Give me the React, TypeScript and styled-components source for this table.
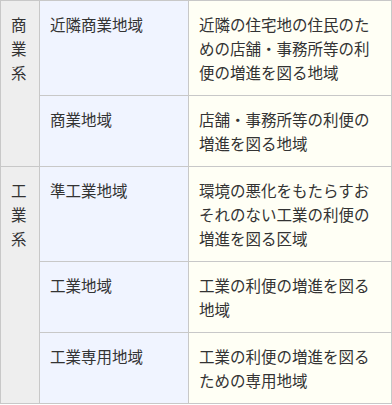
import React from "react";
import styled, { createGlobalStyle } from "styled-components";

const Global = createGlobalStyle`
  html, body { margin: 0; padding: 0; background: #ffffff; }
  body { font-family: "Noto Sans CJK JP", "Noto Sans", sans-serif; }
`;

const Grid = styled.div`
  display: grid;
  grid-template-columns: 38px 148px 202px;
  gap: 1px;
  padding: 1px;
  width: 392px;
  box-sizing: border-box;
  background: #c8c8c8;
  font-size: 15.5px;
  line-height: 24px;
  color: #333333;
`;

const Cell = styled.div<{ $kind: "group" | "name" | "desc"; $span?: number }>`
  padding: 11px 10px;
  background: ${(p) =>
    p.$kind === "group" ? "#eeeeee" : p.$kind === "name" ? "#f0f4ff" : "#fffff5"};
  ${(p) => (p.$span ? `grid-row: span ${p.$span};` : "")}
  word-break: break-all;
  line-break: strict;
`;

type Row = { name: string; desc: string };
type Group = { label: string; rows: Row[] };

const groups: Group[] = [
  {
    label: "商業系",
    rows: [
      { name: "近隣商業地域", desc: "近隣の住宅地の住民のための店舗・事務所等の利便の増進を図る地域" },
      { name: "商業地域", desc: "店舗・事務所等の利便の増進を図る地域" },
    ],
  },
  {
    label: "工業系",
    rows: [
      { name: "準工業地域", desc: "環境の悪化をもたらすおそれのない工業の利便の増進を図る区域" },
      { name: "工業地域", desc: "工業の利便の増進を図る地域" },
      { name: "工業専用地域", desc: "工業の利便の増進を図るための専用地域" },
    ],
  },
];

export default function App() {
  return (
    <>
      <Global />
      <Grid>
        {groups.map((g) =>
          g.rows.map((r, i) => (
            <React.Fragment key={r.name}>
              {i === 0 && (
                <Cell $kind="group" $span={g.rows.length}>
                  {g.label}
                </Cell>
              )}
              <Cell $kind="name">{r.name}</Cell>
              <Cell $kind="desc">{r.desc}</Cell>
            </React.Fragment>
          ))
        )}
      </Grid>
    </>
  );
}
